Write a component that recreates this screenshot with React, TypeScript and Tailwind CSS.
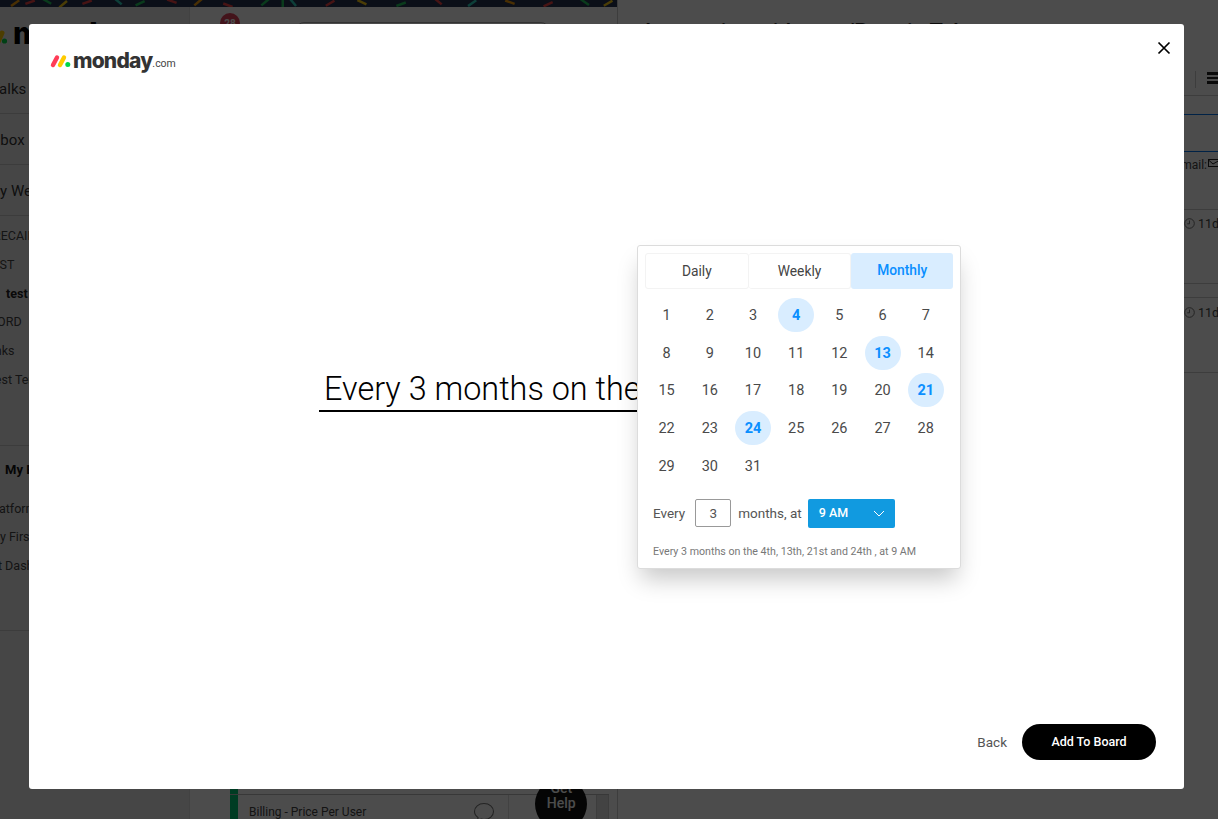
const roboto = "font-['Roboto','Liberation_Sans',sans-serif]";

const confetti = [
  [15, 3, -35, "#f59e0b"], [30, 2, -20, "#ef4444"], [47, 1, 30, "#22c55e"], [63, 4, -40, "#facc15"],
  [87, 2, -20, "#ef4444"], [118, 1, 40, "#2dd4bf"], [140, 3, -25, "#22c55e"], [172, 1, 20, "#ef4444"],
  [198, 2, -40, "#f59e0b"], [228, 5, 20, "#ef4444"], [265, 2, -40, "#22c55e"], [283, 2, 90, "#22c55e"],
  [293, 2, 50, "#2dd4bf"], [330, 3, -30, "#ef4444"], [362, 2, 25, "#facc15"], [401, 4, -20, "#22c55e"],
  [438, 1, 40, "#ef4444"], [472, 3, -35, "#2dd4bf"], [510, 2, 20, "#f59e0b"], [548, 4, -25, "#ef4444"],
  [585, 2, 35, "#22c55e"], [608, 3, -30, "#facc15"],
] as const;

const sidebarTop = [
  { label: "Talks", shift: "-ml-[9px]" },
  { label: "Inbox", shift: "-ml-[12px]" },
  { label: "My Week", shift: "-ml-[13px]" },
];

const boards = [
  { label: "RECAIN", shift: "-ml-[7px]", bold: false },
  { label: "TEST", shift: "-ml-[15px]", bold: false },
  { label: "test", shift: "ml-[6px]", bold: true },
  { label: "WORD", shift: "-ml-[14px]", bold: false },
  { label: "Links", shift: "-ml-[15px]", bold: false },
  { label: "Test Template", shift: "-ml-[12px]", bold: false },
];

const dashboards = [
  { label: "Platform", shift: "-ml-[12px]" },
  { label: "My First", shift: "-ml-[11px]" },
  { label: "Test Dashboard", shift: "-ml-[22px]" },
];

function Clock() {
  return (
    <svg width="11" height="11" viewBox="0 0 11 11" fill="none" stroke="#666" strokeWidth="0.9" className="mt-[2px] mr-[3px] shrink-0">
      <circle cx="5.5" cy="5.5" r="4.8" />
      <path d="M5.5 2.5 V5.8 H3.2" />
    </svg>
  );
}

function Logo() {
  return (
    <div className="flex items-center">
      <svg width="21" height="14" viewBox="0 0 21 14" className="mr-[2px] mt-[1px]">
        <line x1="3" y1="11" x2="7" y2="3.5" stroke="#ff3d57" strokeWidth="4.4" strokeLinecap="round" />
        <line x1="10" y1="11" x2="14" y2="3.5" stroke="#ffcb00" strokeWidth="4.4" strokeLinecap="round" />
        <circle cx="17.8" cy="10.6" r="2.5" fill="#00d647" />
      </svg>
      <span className="font-['Inter',sans-serif] text-[21px] leading-none font-extrabold tracking-[-0.8px] text-[#333]">
        monday
      </span>
      <span className={`${roboto} mt-[7px] text-[10.5px] leading-none text-[#444]`}>.com</span>
    </div>
  );
}

function Background() {
  return (
    <div className={`${roboto} flex h-[819px] w-[1218px] overflow-hidden bg-white text-[#333]`}>
      <div className="flex w-[617px] shrink-0 flex-col">
        <svg width="617" height="7" className="block shrink-0 bg-[#253253]">
          {confetti.map(([x, y, angle, color]) => (
            <rect
              key={x}
              x={x - 5}
              y={y - 1}
              width="10"
              height="2.5"
              fill={color}
              transform={`rotate(${angle} ${x} ${y})`}
            />
          ))}
        </svg>
        <div className="flex min-h-0 flex-1">
          <aside className="flex w-[190px] shrink-0 flex-col overflow-hidden border-r border-[#ddd] bg-[#ececec]">
            <div className="flex h-[56px] shrink-0 items-start gap-[3px] overflow-hidden pt-[8px]">
              <svg width="10" height="22" viewBox="0 0 10 22" className="mt-[10px] shrink-0">
                <line x1="-2" y1="17" x2="2" y2="8" stroke="#ffcb00" strokeWidth="5" strokeLinecap="round" />
                <circle cx="4.5" cy="16" r="2.6" fill="#00d647" />
              </svg>
              <span className="font-['Inter',sans-serif] text-[30px] leading-[36px] font-extrabold whitespace-nowrap text-black">
                monday
              </span>
            </div>
            <div className="flex flex-col">
              {sidebarTop.map((item) => (
                <div key={item.label} className="flex h-[51px] shrink-0 items-center border-b border-[#c8c8c8] pt-[2px] text-[15px] whitespace-nowrap">
                  <span className={item.shift}>{item.label}</span>
                </div>
              ))}
            </div>
            <div className="flex flex-col pt-[6px] text-[12.5px] text-[#444]">
              {boards.map((item) => (
                <div key={item.label} className={`flex h-[28.8px] items-center whitespace-nowrap ${item.bold ? "font-bold text-[#222]" : ""}`}>
                  <span className={item.shift}>{item.label}</span>
                </div>
              ))}
            </div>
            <div className="mt-[50px] flex h-[186px] flex-col border-y border-[#c8c8c8] pt-[14px]">
              <span className="ml-[5px] h-[35px] text-[13px] leading-[20px] font-bold whitespace-nowrap text-[#111]">My Boards</span>
              {dashboards.map((item) => (
                <div key={item.label} className="flex h-[28.7px] items-center text-[12.5px] whitespace-nowrap text-[#444]">
                  <span className={item.shift}>{item.label}</span>
                </div>
              ))}
            </div>
          </aside>
          <main className="flex min-w-0 flex-1 flex-col overflow-hidden">
            <div className="flex h-[17px] shrink-0 items-end gap-[56px] pl-[30px]">
              <span className="-mb-[9px] flex size-[20px] items-center justify-center rounded-full bg-[#e2445c] text-[10px] font-bold text-white">28</span>
              <div className="-mb-[8px] h-[10px] w-[253px] rounded-t-[8px] border border-[#aaa]" />
            </div>
            <div className="mt-auto mr-[8px] ml-[40px] flex h-[5px] shrink-0">
              <div className="w-[8px] bg-[#00c875]" />
            </div>
            <div className="mr-[8px] ml-[40px] flex h-[25px] shrink-0 border-t border-[#bbb]">
              <div className="w-[8px] bg-[#00c875]" />
              <span className="ml-[11px] pt-[8px] text-[12px] leading-[18px] text-[#444]">Billing - Price Per User</span>
              <div className="ml-[105px] flex w-[25px] justify-center pt-[7px]">
                <svg width="22" height="22" viewBox="0 0 22 22" fill="none" stroke="#777" strokeWidth="1.1">
                  <path d="M11 1.5 C16.5 1.5 20.5 5 20.5 9.5 C20.5 14 16.5 17.5 11 17.5 C10 17.5 9 17.4 8 17.1 L4.5 20 L5 15.5 C2.8 14 1.5 12 1.5 9.5 C1.5 5 5.5 1.5 11 1.5 Z" />
                </svg>
              </div>
              <div className="ml-[12px] h-full border-l border-[#ddd]" />
              <div className="relative flex-1">
                <span className="absolute bottom-[-11px] left-[26px] flex size-[52px] flex-col items-center justify-start rounded-full bg-[#111] pt-[3px] text-center text-[14px] leading-[15px] font-medium text-white">
                  Get<br />Help
                </span>
              </div>
              <div className="w-[13px] border-x border-[#ccc] bg-[#e2e2e2]" />
            </div>
          </main>
        </div>
      </div>
      <section className="flex min-w-0 flex-1 flex-col border-l border-[#ccc] text-[12.5px] text-[#444]">
        <div className="h-[20px] shrink-0 pt-[20px] pl-[27px] text-[22px] leading-[24px] font-medium whitespace-nowrap text-[#222]">
          Interaction with seat/Pay via Tab
        </div>
        <div className="mt-[51px] flex h-[24px] shrink-0 items-start justify-end">
          <div className="mr-[11px] h-[17px] border-l border-[#ccc]" />
          <div className="flex w-[11px] flex-col gap-[2px] pt-[1px]">
            <span className="h-[2.5px] bg-[#222]" />
            <span className="h-[2.5px] bg-[#222]" />
            <span className="h-[2.5px] bg-[#222]" />
          </div>
        </div>
        <div className="h-[19px] shrink-0 border-t border-[#ccc]" />
        <div className="h-[38px] shrink-0 border-y border-[#0073ea]" />
        <div className="flex h-[58px] shrink-0 items-start justify-end border-b border-[#ccc] pt-[4px] text-[12px]">
          <span className="whitespace-nowrap">email:</span>
          <svg width="10" height="8" viewBox="0 0 10 8" fill="none" stroke="#222" className="mt-[3px] ml-[1px]">
            <rect x="0.5" y="0.5" width="12" height="7" />
            <path d="M0.5 1 L5 5 L12 1" />
          </svg>
        </div>
        <div className="flex h-[74px] shrink-0 items-start border-b border-[#ccc] pt-[6px] pl-[566px]">
          <Clock />
          <span className="leading-[16px] whitespace-nowrap">11d</span>
        </div>
        <div className="h-[14px] shrink-0 border-b border-[#ccc]" />
        <div className="flex h-[75px] shrink-0 items-start border-b border-[#ccc] pt-[7px] pl-[566px]">
          <Clock />
          <span className="leading-[16px] whitespace-nowrap">11d</span>
        </div>
      </section>
    </div>
  );
}

function CalendarPopover() {
  const picked = [4, 13, 21, 24];
  return (
    <div className="absolute top-[221px] left-[608px] z-10 h-[324px] w-[324px] rounded-[3px] border border-[#dcdcdc] bg-white px-[7px] pt-[7px] shadow-[0_14px_22px_-4px_rgba(0,0,0,0.22)]">
      <div className="flex h-[36px] w-[308px] text-[13.8px]">
        <button className="flex-1 rounded-[3px] border border-[#f3f3f3] font-normal text-[#444]">Daily</button>
        <button className="flex-1 rounded-[3px] border border-l-0 border-[#f3f3f3] font-normal text-[#444]">Weekly</button>
        <button className="flex-1 rounded-[3px] bg-[#d9edff] pb-[2px] font-medium text-[#0a8fff]">Monthly</button>
      </div>
      <div className="mt-[8px] grid grid-cols-[repeat(7,43.2px)] auto-rows-[37.7px] text-[14.5px] text-[#4a4a4a]">
        {Array.from({ length: 31 }, (_, i) => i + 1).map((day) => (
          <div key={day} className="flex items-center justify-center">
            <span
              className={
                picked.includes(day)
                  ? "flex h-[34px] w-[36px] -translate-y-px items-center justify-center rounded-full bg-[#d9edff] pt-[2px] font-bold text-[#0a8fff]"
                  : "flex h-[34px] w-[36px] items-center justify-center"
              }
            >
              {day}
            </span>
          </div>
        ))}
      </div>
      <div className="mt-[13px] ml-[7px] flex h-[30px] items-center text-[13.5px] text-[#555]">
        <span className="ml-px">Every</span>
        <span className="mr-[7px] ml-[10px] flex h-[28px] w-[36px] items-center justify-center rounded-[2px] border border-[#999] text-[#555]">3</span>
        <span>months, at</span>
        <div className="ml-[6px] flex h-[29px] w-[87px] items-center justify-between rounded-[2px] bg-[#119ae0] pr-[10px] pl-[11px] text-[12.5px] font-medium text-white">
          <span>9 AM</span>
          <svg width="12" height="7" viewBox="0 0 12 7" fill="none" stroke="#fff" strokeWidth="1">
            <path d="M1 1 L6 6 L11 1" />
          </svg>
        </div>
      </div>
      <p className="mt-[16px] ml-[8px] text-[10.65px] leading-[16px] whitespace-nowrap text-[#777]">
        Every 3 months on the 4th, 13th, 21st and 24th , at 9 AM
      </p>
    </div>
  );
}

export default function App() {
  return (
    <div className={`${roboto} relative h-[819px] w-[1218px] overflow-hidden`}>
      <Background />
      <div className="absolute inset-0 bg-black/70" />
      <div className="absolute top-[24px] left-[29px] flex h-[765px] w-[1155px] flex-col rounded-[3px] bg-white">
        <div className="flex h-[75px] shrink-0 items-start justify-between pt-[26px] pr-[13px] pl-[21px]">
          <Logo />
          <button aria-label="Close" className="-mt-[9px]">
            <svg width="14" height="14" viewBox="0 0 14 14" fill="none" stroke="#000" strokeWidth="1.7">
              <path d="M1.5 1.5 L12.5 12.5 M12.5 1.5 L1.5 12.5" />
            </svg>
          </button>
        </div>
        <div className="flex flex-1 pt-[267px] pl-[290px]">
          <div className="h-[46px] w-[400px] overflow-hidden border-b-2 border-black pl-[5px] text-[32.4px] leading-[46px] font-light whitespace-nowrap text-black">
            Every 3 months on the
          </div>
        </div>
        <div className="flex shrink-0 items-center justify-end gap-[15px] pr-[28px] pb-[29px]">
          <button className="text-[13.5px] text-[#555]">Back</button>
          <button className="h-[36px] w-[134px] rounded-full bg-black text-[12.5px] font-medium text-white">Add To Board</button>
        </div>
        <CalendarPopover />
      </div>
    </div>
  );
}
